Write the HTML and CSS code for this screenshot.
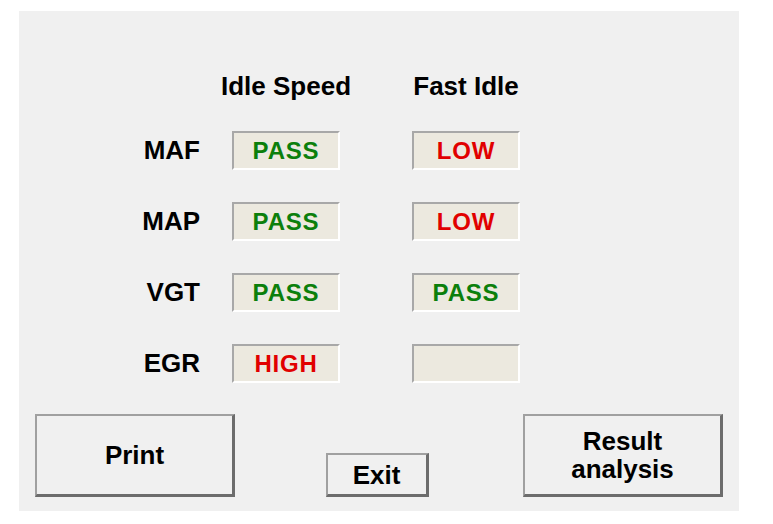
FILE: index.html
```html
<!DOCTYPE html>
<html lang="en">
<head>
    <meta charset="UTF-8">
    <meta name="viewport" content="width=device-width, initial-scale=1.0">
    <title>Test results</title>
    <link rel="stylesheet" href="styles.css">
</head>
<body>
    <div class="panel">
        <div class="results">
            <div class="head col-a">Idle Speed</div>
            <div class="head col-b">Fast Idle</div>

            <div class="label">MAF</div>
            <div class="cell col-a pass">PASS</div>
            <div class="cell col-b fail">LOW</div>

            <div class="label">MAP</div>
            <div class="cell col-a pass">PASS</div>
            <div class="cell col-b fail">LOW</div>

            <div class="label">VGT</div>
            <div class="cell col-a pass">PASS</div>
            <div class="cell col-b pass">PASS</div>

            <div class="label">EGR</div>
            <div class="cell col-a fail">HIGH</div>
            <div class="cell col-b"></div>
        </div>

        <div class="actions">
            <button class="btn btn-big">Print</button>
            <button class="btn btn-small">Exit</button>
            <button class="btn btn-big">Result<br>analysis</button>
        </div>
    </div>
</body>
</html>
```

FILE: styles.css
```css
body {
    margin: 0;
    background: #fff;
    font-family: "Liberation Sans", Arial, sans-serif;
    font-weight: bold;
    color: #000;
}
.panel {
    margin: 11px 0 0 19px;
    width: 720px;
    height: 500px;
    background: #f0f0f0;
    display: flex;
    flex-direction: column;
}
.results {
    display: grid;
    grid-template-columns: 181px 32px 108px 72px 108px;
    grid-template-rows: 26px 39px 39px 39px 39px;
    row-gap: 32px;
    padding-top: 62px;
}
.head {
    font-size: 26px;
    line-height: 26px;
    text-align: center;
    white-space: nowrap;
    justify-self: center;
}
.col-a {
    grid-column: 3;
}
.col-b {
    grid-column: 5;
}
.label {
    grid-column: 1;
    font-size: 26px;
    text-align: right;
    align-self: center;
}
.cell {
    box-sizing: border-box;
    background: #ece9df;
    border: 2px solid;
    border-color: #a8a8a8 #fff #fff #a8a8a8;
    font-size: 24px;
    letter-spacing: 0.8px;
    display: flex;
    align-items: center;
    justify-content: center;
}
.pass {
    color: #0c7f0c;
}
.fail {
    color: #e10000;
}
.actions {
    margin-top: auto;
    display: flex;
    justify-content: space-between;
    align-items: flex-end;
    padding: 0 16px 14px;
}
.btn {
    box-sizing: border-box;
    background: #f0f0f0;
    font-family: inherit;
    font-weight: bold;
    font-size: 26px;
    line-height: 28px;
    color: #000;
    border: 2px solid;
    border-color: #a0a0a0 #6c6c6c #6c6c6c #a0a0a0;
    border-width: 2px 3px 3px 2px;
    padding: 0;
}
.btn-big {
    width: 200px;
    height: 83px;
}
.btn-small {
    width: 103px;
    height: 44px;
    margin-left: -4px;
}
```
